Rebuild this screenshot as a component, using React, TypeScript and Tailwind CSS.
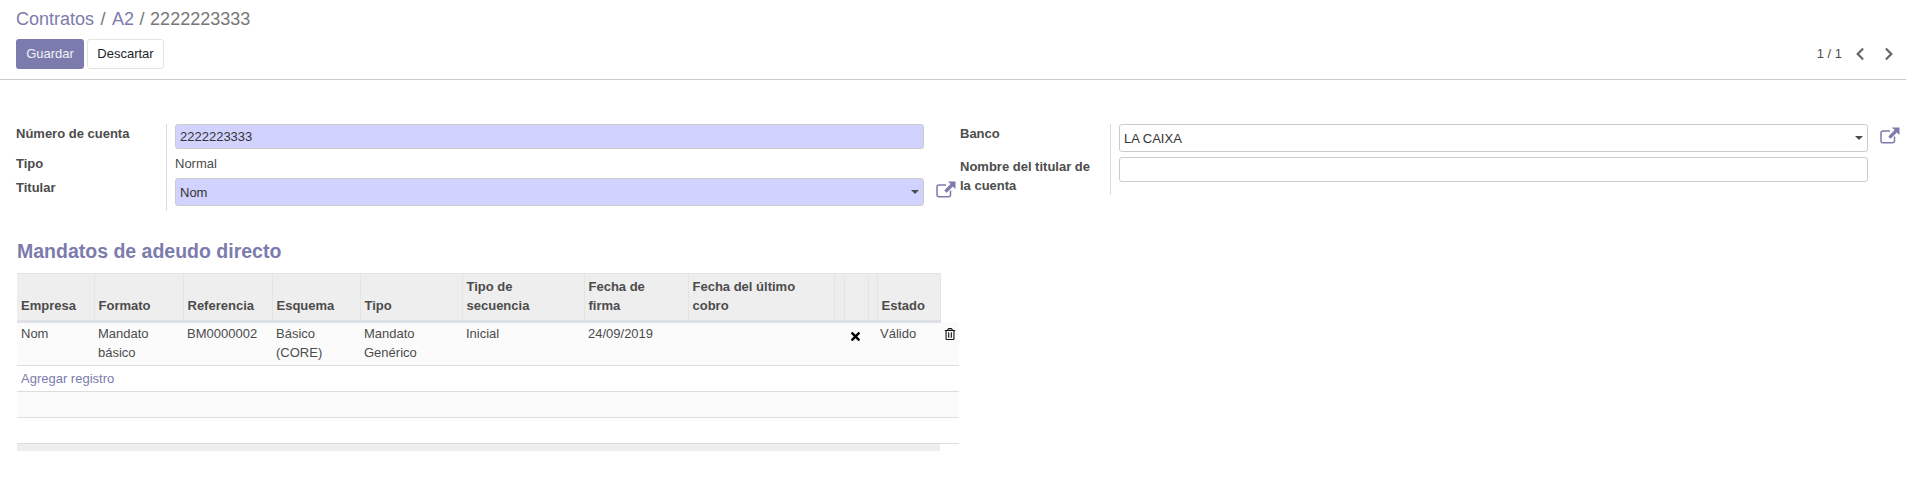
import { FaChevronLeft, FaChevronRight, FaRegTrashAlt, FaTimes } from 'react-icons/fa';

const columns = [
  { label: 'Empresa', width: 'w-[77px]' },
  { label: 'Formato', width: 'w-[89px]' },
  { label: 'Referencia', width: 'w-[89px]' },
  { label: 'Esquema', width: 'w-[88px]' },
  { label: 'Tipo', width: 'w-[102px]' },
  { label: 'Tipo de secuencia', width: 'w-[122px]' },
  { label: 'Fecha de firma', width: 'w-[104px]' },
  { label: 'Fecha del último cobro', width: 'w-[146px]' },
  { label: '', width: 'w-[10px]' },
  { label: '', width: 'w-[24px]' },
  { label: '', width: 'w-[9px]' },
  { label: 'Estado', width: 'w-[63px]' },
];

function ExternalLink() {
  return (
    <svg width="20" height="17" viewBox="0 0 20 17" fill="none" className="text-[#7c7bad]">
      <path d="M14.5 9.5v4.2a2 2 0 0 1-2 2H3a2 2 0 0 1-2-2V6a2 2 0 0 1 2-2h7" stroke="currentColor" strokeWidth="1.5" />
      <path d="M12 0.5h7.5V8l-2.6-2.6-6.3 6.3-2.3-2.3 6.3-6.3z" fill="currentColor" />
    </svg>
  );
}

function Select({ value, highlighted }: { value: string; highlighted?: boolean }) {
  return (
    <div
      className={`flex-1 h-[28px] flex items-center justify-between px-[4px] border border-[#cccccc] rounded-[3px] text-[#333333] ${
        highlighted ? 'bg-[#d2d2ff]' : 'bg-white'
      }`}
    >
      <span className="pt-[1px]">{value}</span>
      <span className="w-0 h-0 border-x-[4px] border-x-transparent border-t-[4px] border-t-[#4c4c4c]" />
    </div>
  );
}

function Label({ children, className }: { children: React.ReactNode; className?: string }) {
  return <div className={`shrink-0 font-bold text-[#4c4c4c] leading-[19px] ${className}`}>{children}</div>;
}

export default function App() {
  return (
    <div className="w-[1906px] h-[480px] bg-white text-[13px] text-[#4c4c4c] overflow-hidden" style={{ fontFamily: '"Liberation Sans", Arial, sans-serif' }}>
      {/* Control panel */}
      <div className="h-[80px] border-b border-[#cccccc] pl-[16px] pr-[10px] pt-[8px]">
        <div className="text-[18px] leading-[23px] h-[31px] text-[#777777]">
          <span className="text-[#7c7bad]">Contratos</span>
          <span className="mx-[1.5px]"> / </span>
          <span className="text-[#7c7bad]">A2</span>
          <span className="mx-[0.5px]"> / </span>
          <span>2222223333</span>
        </div>
        <div className="flex items-center justify-between">
          <div className="flex gap-[3px]">
            <button className="w-[68px] h-[30px] bg-[#7c7bad] text-white/90 rounded-[3px]">Guardar</button>
            <button className="w-[77px] h-[30px] bg-white text-[#212529] border border-[#e3e3e3] rounded-[3px]">Descartar</button>
          </div>
          <div className="flex items-center">
            <span className="mr-[11px]">1 / 1</span>
            <FaChevronLeft className="text-[#666666] text-[14px] mr-[15px]" />
            <FaChevronRight className="text-[#666666] text-[14px]" />
          </div>
        </div>
      </div>

      {/* Form groups */}
      <div className="flex pt-[44px] pl-[16px]">
        <div className="w-[944px] shrink-0">
          <div className="flex h-[29px]">
            <Label className="w-[151px] border-r border-[#dddddd]">Número de cuenta</Label>
            <div className="w-[749px] ml-[8px] h-[25px] bg-[#d2d2ff] border border-[#cccccc] rounded-[3px] pl-[4px] leading-[23px] text-[#333333]">
              2222223333
            </div>
          </div>
          <div className="flex h-[25px]">
            <Label className="w-[151px] pt-[1px] border-r border-[#dddddd]">Tipo</Label>
            <div className="ml-[8px] pt-[1px] leading-[19px]">Normal</div>
          </div>
          <div className="flex h-[33px]">
            <Label className="w-[151px] border-r border-[#dddddd]">Titular</Label>
            <div className="w-[749px] ml-[8px] flex">
              <Select value="Nom" highlighted />
            </div>
            <div className="ml-[12px] pt-[3px]">
              <ExternalLink />
            </div>
          </div>
        </div>

        <div className="w-[945px] shrink-0">
          <div className="flex h-[33px]">
            <Label className="w-[151px] border-r border-[#dddddd]">Banco</Label>
            <div className="w-[749px] ml-[8px] flex">
              <Select value="LA CAIXA" />
            </div>
            <div className="ml-[12px] pt-[3px]">
              <ExternalLink />
            </div>
          </div>
          <div className="flex h-[38px]">
            <Label className="w-[151px] pr-[10px] border-r border-[#dddddd]">Nombre del titular de la cuenta</Label>
            <div className="w-[749px] ml-[8px] h-[25px] bg-white border border-[#cccccc] rounded-[3px]" />
          </div>
        </div>
      </div>

      {/* Mandates */}
      <div className="pl-[17px] pt-[29px]">
        <h2 className="text-[19.5px] leading-[23px] font-bold text-[#7c7bad] mb-[10px]">Mandatos de adeudo directo</h2>
        <table className="table-fixed border-collapse w-[942px] leading-[19px]">
          <thead>
            <tr>
              {columns.map((col, i) => (
                <th
                  key={i}
                  className={`${col.width} bg-[#eeeeee] border-r border-[#e4e4e4] border-t border-t-[#e4e4e4] border-b-[3px] border-b-[#dee2e6] align-bottom text-left font-bold pt-[3px] pb-[5px] last:border-r-0 ${
                    col.label ? 'pl-[4px] pr-[16px]' : 'px-0'
                  }`}
                >
                  {col.label}
                </th>
              ))}
              <th className="w-[19px] bg-white" />
            </tr>
          </thead>
          <tbody>
            <tr className="h-[44px] bg-[#fbfbfb] border-b border-[#dddddd] align-top">
              <td className="px-[4px] pt-[1px]">Nom</td>
              <td className="px-[4px] pt-[1px]">Mandato básico</td>
              <td className="px-[4px] pt-[1px]">BM0000002</td>
              <td className="px-[4px] pt-[1px]">Básico (CORE)</td>
              <td className="px-[4px] pt-[1px]">Mandato Genérico</td>
              <td className="px-[4px] pt-[1px]">Inicial</td>
              <td className="px-[4px] pt-[1px]">24/09/2019</td>
              <td />
              <td />
              <td className="pt-[7px] pr-[2px]">
                <FaTimes className="text-black text-[13px] mx-auto" />
              </td>
              <td />
              <td className="px-[3px] pt-[1px]">Válido</td>
              <td className="pt-[6px] pl-[4px]">
                <FaRegTrashAlt className="text-[#111111] text-[12px]" />
              </td>
            </tr>
            <tr className="h-[26px] border-b border-[#dddddd]">
              <td colSpan={13} className="px-[4px]">
                <a className="text-[#7c7bad]">Agregar registro</a>
              </td>
            </tr>
            <tr className="h-[26px] bg-[#fbfbfb] border-b border-[#dddddd]">
              <td colSpan={13} />
            </tr>
            <tr className="h-[26px] border-b border-[#dddddd]">
              <td colSpan={13} />
            </tr>
            <tr className="h-[7px]">
              <td colSpan={12} className="bg-[#eeeeee]" />
              <td />
            </tr>
          </tbody>
        </table>
      </div>
    </div>
  );
}
